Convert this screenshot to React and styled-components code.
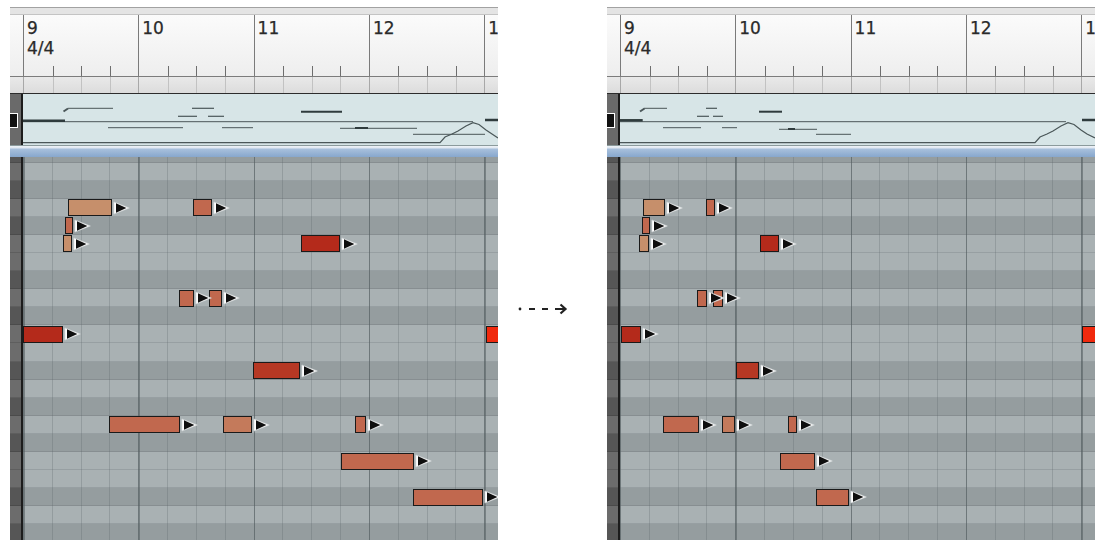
import React from 'react';
import styled, { createGlobalStyle } from 'styled-components';

const BAR = 115.3;
const BEAT = BAR / 4;
const ROW = 18.1;

const Global = createGlobalStyle`
  html, body { margin: 0; padding: 0; background: #ffffff; }
  body { font-family: "DejaVu Sans", "Liberation Sans", sans-serif; overflow: hidden; }
`;

const Page = styled.div`
  display: flex;
  align-items: flex-start;
  width: 1101px;
  height: 540px;
  padding-top: 7px;
  box-sizing: border-box;
  overflow: hidden;
`;

const Panel = styled.div`
  flex: none;
  width: ${p => p.$w}px;
  margin-left: ${p => p.$ml || 0}px;
  height: 533px;
  display: flex;
  flex-direction: column;
  overflow: hidden;
`;

const TopBand = styled.div`
  height: 8px;
  flex: none;
  box-sizing: border-box;
  border-top: 1px solid #a2a2a2;
  border-bottom: 1px solid #c4c4c4;
  background: #e4e4e4;
`;

const Ruler = styled.div`
  height: 62px;
  flex: none;
  display: flex;
  box-sizing: border-box;
  border-bottom: 1px solid #7c7c7c;
  background: linear-gradient(#fbfbfb, #eeeeee);
`;

const KeySpacer = styled.div`
  width: 13px;
  flex: none;
`;

const BarCell = styled.div`
  width: ${BAR}px;
  flex: none;
  box-sizing: border-box;
  border-left: 1px solid ${p => p.$line || '#7a7a7a'};
  display: flex;
  flex-direction: column;
  justify-content: space-between;
`;

const BarLabel = styled.div`
  padding: 3px 0 0 3px;
  font-size: 17px;
  line-height: 20px;
  color: #2a2a2a;
  -webkit-text-stroke: 0.25px #2a2a2a;
  white-space: pre;
`;

const Ticks = styled.div`
  height: ${p => p.$h}px;
  display: grid;
  grid-template-columns: repeat(4, 1fr);
`;

const Tick = styled.div`
  border-left: ${p => (p.$first ? 'none' : `1px solid ${p.$c}`)};
`;

const Strip = styled.div`
  height: 16px;
  flex: none;
  display: flex;
  background: linear-gradient(#e9e9e9, #dcdcdc);
`;

const Overview = styled.div`
  height: 53px;
  flex: none;
  display: flex;
  box-sizing: border-box;
  border-top: 1px solid #2c2c2c;
  border-bottom: 1px solid #8b9a9c;
  background: #d7e5e7;
`;

const OverviewKey = styled.div`
  width: 11px;
  flex: none;
  position: relative;
  background: #6a6a6a;
`;

const Marker = styled.div`
  position: absolute;
  left: 0;
  top: 19px;
  width: 7px;
  height: 13px;
  background: #111;
  border: 1.5px solid #fff;
  border-left: none;
`;

const EdgeLine = styled.div`
  width: 2px;
  flex: none;
  background: #1c1c1c;
`;

const OverviewBody = styled.div`
  flex: 1;
  position: relative;
  overflow: hidden;
`;

const Separator = styled.div`
  height: 11px;
  flex: none;
  background: linear-gradient(#eef2f7 0, #dfe7f1 2px, #a8c0dc 3px, #87a7cd 100%);
`;

const Grid = styled.div`
  flex: 1;
  min-height: 0;
  display: flex;
  overflow: hidden;
`;

const KeyStrip = styled.div`
  width: 11px;
  flex: none;
  overflow: hidden;
`;

const NoteArea = styled.div`
  flex: 1;
  position: relative;
  overflow: hidden;
`;

const RowStack = styled.div`
  margin-top: -12.6px;
  display: flex;
  flex-direction: column;
`;

const Row = styled.div`
  height: ${ROW}px;
  flex: none;
  position: relative;
  box-sizing: border-box;
  background: ${p => (p.$dark ? '#959d9f' : '#a9b1b3')};
  box-shadow: inset 0 -1px 0 rgba(60, 70, 72, 0.16);
`;

const KeyRow = styled.div`
  height: ${ROW}px;
  flex: none;
  background: ${p => (p.$dark ? '#565656' : '#6c6c6c')};
  box-shadow: inset 0 -1px 0 rgba(0, 0, 0, 0.12);
`;

const LineLayer = styled.div`
  position: absolute;
  inset: 0;
  z-index: 1;
  pointer-events: none;
  background-image:
    repeating-linear-gradient(to right, rgba(80, 90, 93, 0.55) 0 1.5px, transparent 1.5px ${BAR}px),
    repeating-linear-gradient(to right, rgba(90, 100, 104, 0.28) 0 1px, transparent 1px ${BEAT}px);
`;

const NoteBox = styled.div`
  position: absolute;
  z-index: 2;
  top: 0.5px;
  height: 17px;
  box-sizing: border-box;
  border: 1.5px solid #1a1a1a;
  background: ${p => p.$fill};
`;

const EndMark = styled.svg`
  position: absolute;
  z-index: 3;
  top: 2px;
  width: 17px;
  height: 14px;
  overflow: visible;
`;

const ArrowZone = styled.div`
  flex: none;
  width: 109px;
  padding-top: 295px;
  display: flex;
  justify-content: flex-start;
`;

const ArrowSvg = styled.svg`
  margin-left: 20px;
  width: 52px;
  height: 14px;
`;

const COLORS = {
  tan: '#c68f6b',
  salmon: '#c1684e',
  light: '#c47a5b',
  red: '#b42a1b',
  brick: '#b63824',
  bright: '#f0290d',
};

// row index: 0 Bb (dark), then descending chromatic
const DARK = [true, false, true, false, true, false, false, true, false, true, false, false];
const rowIsDark = i => DARK[i % 12];

const leftNotes = [
  { x: 45.3, w: 43.4, r: 3, c: 'tan' },
  { x: 42, w: 7.7, r: 4, c: 'salmon' },
  { x: 39.7, w: 9, r: 5, c: 'tan' },
  { x: 169.7, w: 19, r: 3, c: 'salmon' },
  { x: 156, w: 15, r: 8, c: 'salmon' },
  { x: 186.3, w: 12.4, r: 8, c: 'salmon' },
  { x: 0, w: 40.3, r: 10, c: 'red' },
  { x: 277.7, w: 39.3, r: 5, c: 'red' },
  { x: 462.7, w: 30, r: 10, c: 'bright', noMark: true },
  { x: 229.7, w: 47.3, r: 12, c: 'brick' },
  { x: 86, w: 71, r: 15, c: 'salmon' },
  { x: 199.7, w: 29.6, r: 15, c: 'light' },
  { x: 332, w: 11, r: 15, c: 'salmon' },
  { x: 318, w: 73.3, r: 17, c: 'salmon' },
  { x: 389.7, w: 70, r: 19, c: 'salmon' },
];

const rightNotes = [
  { x: 23.3, w: 21.7, r: 3, c: 'tan' },
  { x: 86, w: 9, r: 3, c: 'salmon' },
  { x: 21.7, w: 8.3, r: 4, c: 'salmon' },
  { x: 19.3, w: 9.7, r: 5, c: 'tan' },
  { x: 140, w: 19.3, r: 5, c: 'red' },
  { x: 77.3, w: 10, r: 8, c: 'salmon' },
  { x: 93.3, w: 10, r: 8, c: 'salmon' },
  { x: 0.7, w: 20, r: 10, c: 'red' },
  { x: 115.7, w: 23.3, r: 12, c: 'brick' },
  { x: 43.3, w: 35.7, r: 15, c: 'salmon' },
  { x: 101.7, w: 13.3, r: 15, c: 'light' },
  { x: 167.7, w: 9, r: 15, c: 'salmon' },
  { x: 160, w: 35, r: 17, c: 'salmon' },
  { x: 195.7, w: 33.3, r: 19, c: 'salmon' },
  { x: 462.3, w: 30, r: 10, c: 'bright', noMark: true },
];

// overview segments in panel-local coords: [x1, x2, y, thick]
const leftOverview = {
  segs: [
    [13, 463, 27.7, 1],
    [13, 55, 26.8, 2.5],
    [58, 103, 14.3, 1],
    [182, 204, 14.3, 1.2],
    [168, 187, 22.3, 1.2],
    [198, 214, 22.3, 1.2],
    [98, 173, 33.7, 1],
    [212, 243, 33.7, 1],
    [291, 332, 17.7, 2],
    [330, 407, 34.3, 1],
    [345, 358, 34, 2],
    [403, 475, 40.3, 1],
    [475, 488, 26, 2.5],
  ],
  ticks: [[53.5, 17.5, 58, 14.5]],
  auto: '13,48.7 430,48.7 435,43 442,40 448,37 456,32 463,28.7 469,30.5 476,36 482,40 488,44',
};

const rightOverview = {
  segs: [
    [13, 459, 27.7, 1],
    [13, 35.7, 26.3, 2.5],
    [37, 60, 14.3, 1],
    [99, 110, 14.3, 1.2],
    [90, 102, 22.3, 1.2],
    [106, 116, 22.3, 1.2],
    [152, 175, 17.7, 2],
    [56, 94, 33.7, 1],
    [115, 130, 33.7, 1],
    [172, 210, 35.3, 1],
    [181, 188, 35, 2],
    [209, 244, 40.3, 1],
    [475, 488, 26, 2.5],
  ],
  ticks: [[33, 17.5, 37.5, 14.5]],
  auto: '13,48.7 428,48.7 433,43 440,40 446,37 454,32 461,28.7 467,30.5 474,36 480,40 488,44',
};

function OverviewDrawing({ data, width }) {
  return (
    <svg width={width} height={51} style={{ position: 'absolute', left: -13, top: 0 }}>
      {data.segs.map(([x1, x2, y, t], i) => (
        <line key={i} x1={x1} x2={x2} y1={y} y2={y} stroke={t > 1.5 ? '#2f3b3d' : '#4a5658'} strokeWidth={t} />
      ))}
      {data.ticks.map(([x1, y1, x2, y2], i) => (
        <line key={'t' + i} x1={x1} y1={y1} x2={x2} y2={y2} stroke="#4a5658" strokeWidth="2" />
      ))}
      <polyline points={data.auto} fill="none" stroke="#4a5658" strokeWidth="1.2" />
    </svg>
  );
}

function Mark({ left }) {
  return (
    <EndMark viewBox="0 0 17 14" style={{ left }}>
      <polygon points="0.9,0.9 0.9,13.1 16.4,7" fill="#ffffff" stroke="#cfd4d5" strokeWidth="0.6" />
      <polygon points="3,2.3 3,11.7 13.4,7" fill="#0e0e0e" />
    </EndMark>
  );
}

function RulerBars({ labels }) {
  return (
    <Ruler>
      <KeySpacer />
      {labels.map((l, i) => (
        <BarCell key={i}>
          <BarLabel>{l}</BarLabel>
          <Ticks $h={10}>
            {[0, 1, 2, 3].map(k => (
              <Tick key={k} $first={k === 0} $c="#6e6e6e" />
            ))}
          </Ticks>
        </BarCell>
      ))}
    </Ruler>
  );
}

function StripBars() {
  return (
    <Strip>
      <KeySpacer />
      {[0, 1, 2, 3, 4].map(i => (
        <BarCell key={i} $line="#a8a8a8">
          <Ticks $h={16}>
            {[0, 1, 2, 3].map(k => (
              <Tick key={k} $first={k === 0} $c="#c2c2c2" />
            ))}
          </Ticks>
        </BarCell>
      ))}
    </Strip>
  );
}

function Editor({ width, ml, notes, overview }) {
  const rows = Array.from({ length: 23 }, (_, i) => i);
  return (
    <Panel $w={width} $ml={ml}>
      <TopBand />
      <RulerBars labels={['9\n4/4', '10', '11', '12', '13']} />
      <StripBars />
      <Overview>
        <OverviewKey>
          <Marker />
        </OverviewKey>
        <EdgeLine />
        <OverviewBody>
          <OverviewDrawing data={overview} width={width} />
        </OverviewBody>
      </Overview>
      <Separator />
      <Grid>
        <KeyStrip>
          <RowStack>
            {rows.map(i => (
              <KeyRow key={i} $dark={rowIsDark(i)} />
            ))}
          </RowStack>
        </KeyStrip>
        <EdgeLine />
        <NoteArea>
          <LineLayer />
          <RowStack>
            {rows.map(i => (
              <Row key={i} $dark={rowIsDark(i)}>
                {notes
                  .filter(n => n.r === i)
                  .map((n, k) => (
                    <React.Fragment key={k}>
                      <NoteBox $fill={COLORS[n.c]} style={{ left: n.x, width: n.w }} />
                      {!n.noMark && <Mark left={n.x + n.w + 1} />}
                    </React.Fragment>
                  ))}
              </Row>
            ))}
          </RowStack>
        </NoteArea>
      </Grid>
    </Panel>
  );
}

export default function App() {
  return (
    <>
      <Global />
      <Page>
        <Editor width={488} ml={10} notes={leftNotes} overview={leftOverview} />
        <ArrowZone>
          <ArrowSvg viewBox="0 0 52 14">
            <circle cx="2" cy="7" r="1.4" fill="#222" />
            <line x1="11" y1="7" x2="17" y2="7" stroke="#222" strokeWidth="2" />
            <line x1="24" y1="7" x2="30" y2="7" stroke="#222" strokeWidth="2" />
            <line x1="37" y1="7" x2="47" y2="7" stroke="#222" strokeWidth="2" />
            <polyline points="42.5,2.5 47.5,7 42.5,11.5" fill="none" stroke="#222" strokeWidth="2.2" />
          </ArrowSvg>
        </ArrowZone>
        <Editor width={488} notes={rightNotes} overview={rightOverview} />
      </Page>
    </>
  );
}
